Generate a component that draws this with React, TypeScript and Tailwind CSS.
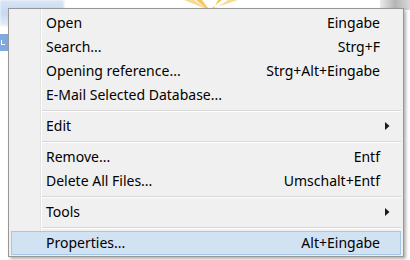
import React from "react";

type Item =
  | { type: "sep" }
  | { type: "item"; label: string; shortcut?: string; sub?: boolean; active?: boolean };

const items: Item[] = [
  { type: "item", label: "Open", shortcut: "Eingabe" },
  { type: "item", label: "Search...", shortcut: "Strg+F" },
  { type: "item", label: "Opening reference...", shortcut: "Strg+Alt+Eingabe" },
  { type: "item", label: "E-Mail Selected Database..." },
  { type: "sep" },
  { type: "item", label: "Edit", sub: true },
  { type: "sep" },
  { type: "item", label: "Remove...", shortcut: "Entf" },
  { type: "item", label: "Delete All Files...", shortcut: "Umschalt+Entf" },
  { type: "sep" },
  { type: "item", label: "Tools", sub: true },
  { type: "sep" },
  { type: "item", label: "Properties...", shortcut: "Alt+Eingabe", active: true },
];

function Arrow() {
  return (
    <svg width="5" height="8" viewBox="0 0 5 8" className="block">
      <path d="M0 0 L4.5 4 L0 8 Z" fill="#1a1a1a" />
    </svg>
  );
}

export default function App() {
  return (
    <div
      className="relative w-[410px] h-[260px] overflow-hidden bg-white"
      style={{ fontFamily: '"Noto Sans", "Open Sans", sans-serif' }}
    >
      {/* background decorations behind the menu */}
      <div className="absolute left-0 top-0 w-[64px] h-[26px] bg-gradient-to-b from-[#d9e6f6] via-[#c6d9f1] to-[#e6eef9] blur-[1px]" />
      <div className="absolute left-0 top-[34px] w-[8px] h-[17px] bg-[#7fa9df]">
        <div className="mt-[6px] ml-[1px] w-[4px] h-[5px] border-l border-b border-white" />
      </div>
      <div className="absolute left-[176px] top-0 w-[70px] h-[8px]">
        <svg width="70" height="8" viewBox="0 0 70 8">
          <path d="M8 0 L28 8 L30 8 L18 0 Z" fill="#f3d27a" opacity="0.8" />
          <path d="M20 0 L30 8 L32 8 L26 0 Z" fill="#f0c34e" opacity="0.9" />
          <path d="M62 0 L38 8 L40 8 L52 0 Z" fill="#f3d27a" opacity="0.8" />
          <path d="M46 0 L36 8 L38 8 L42 0 Z" fill="#f0c34e" opacity="0.9" />
        </svg>
      </div>
      <div className="absolute left-[380px] top-0 w-[30px] h-[10px] bg-gradient-to-r from-[#ececec] via-[#b5b5b5] to-[#d9d9d9]" />

      {/* the menu */}
      <div className="ml-[8px] mt-[8px] w-[396px] relative border border-[#979797] bg-[#f0f0f0] pt-[2px] pb-[1px] shadow-[2px_2px_3px_rgba(0,0,0,0.3)]">
        <div className="absolute left-[31px] top-0 bottom-0 w-[2px] border-l border-[#e2e3e3] bg-[#f0f0f0]">
          <div className="ml-0 w-[1px] h-full bg-white" />
        </div>
        {items.map((it, i) =>
          it.type === "sep" ? (
            <div key={i} className="h-[7px] flex items-center pl-[33px] pr-[2px] relative">
              <div className="w-full">
                <div className="h-[1px] bg-[#d7d7d7]" />
                <div className="h-[1px] bg-white" />
              </div>
            </div>
          ) : (
            <div
              key={i}
              className={
                "relative mx-[2px] h-[24px] grid grid-cols-[1fr_auto_20px] items-center pl-[34px] text-[14px] text-black leading-none " +
                (it.active ? "bg-[#d1e2f3] border border-[#a7c5e5]" : "border border-transparent")
              }
            >
              <span className="whitespace-nowrap">{it.label}</span>
              <span className="whitespace-nowrap text-right">{it.shortcut ?? ""}</span>
              <span className="flex justify-start pl-[5px]">{it.sub ? <Arrow /> : null}</span>
            </div>
          )
        )}
      </div>
    </div>
  );
}
